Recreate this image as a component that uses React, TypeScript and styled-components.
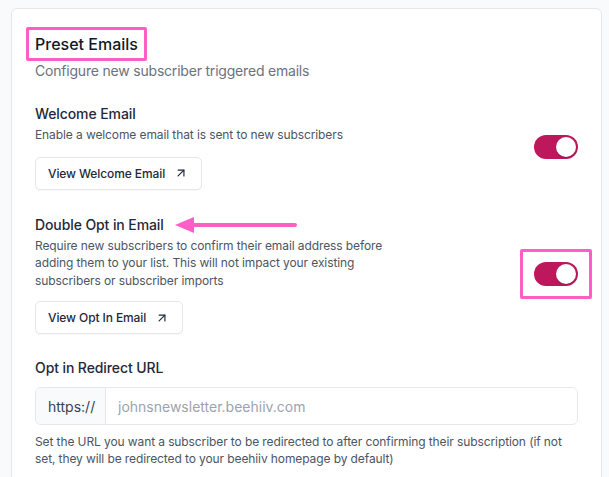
import React from "react";
import styled, { createGlobalStyle } from "styled-components";
import { ArrowUpRight } from "lucide-react";

const GlobalStyle = createGlobalStyle`
  html, body { margin: 0; padding: 0; background: #f9fafb; }
  body { font-family: Inter, "Noto Sans", sans-serif; -webkit-font-smoothing: antialiased; }
  * { box-sizing: border-box; }
`;

const Page = styled.div`
  padding: 8px 7px 0 11px;
  height: 477px;
  overflow: hidden;
`;

const Card = styled.div`
  background: #ffffff;
  border: 1px solid #e5e7eb;
  border-radius: 6px;
  padding: 18px 23px 40px 23px;
  display: flex;
  flex-direction: column;
`;

const Title = styled.h2`
  align-self: flex-start;
  margin: 0 0 0 -9px;
  padding: 3px 6px;
  border: 3px solid #ff5ec7;
  border-radius: 2px;
  font-size: 16px;
  line-height: 22px;
  font-weight: 500;
  color: #111827;
`;

const Subtitle = styled.p`
  margin: 0;
  font-size: 14px;
  line-height: 20px;
  color: #6b7280;
  letter-spacing: -0.2px;
`;

const Section = styled.div<{ $mt: number }>`
  margin-top: ${(p) => p.$mt}px;
  display: flex;
  align-items: center;
  justify-content: space-between;
`;

const Info = styled.div`
  display: flex;
  flex-direction: column;
  align-items: flex-start;
  max-width: 360px;
`;

const LabelRow = styled.div`
  display: flex;
  align-items: center;
`;

const Label = styled.div`
  font-size: 14px;
  line-height: 20px;
  font-weight: 500;
  color: #1f2937;
  letter-spacing: -0.1px;
`;

const Desc = styled.p<{ $mb: number }>`
  margin: 2px 0 ${(p) => p.$mb}px;
  font-size: 12px;
  line-height: 17.5px;
  color: #4b5563;
  letter-spacing: -0.1px;
`;

const Button = styled.button`
  display: inline-flex;
  align-items: center;
  gap: 9px;
  height: 33px;
  padding: 0 13px 0 12px;
  background: #ffffff;
  border: 1px solid #e5e7eb;
  border-radius: 5px;
  box-shadow: 0 1px 1px rgba(0, 0, 0, 0.03);
  font-family: inherit;
  font-size: 12px;
  font-weight: 500;
  letter-spacing: -0.1px;
  color: #1f2937;
  cursor: pointer;
`;

const ToggleWrap = styled.div<{ $highlight?: boolean }>`
  display: flex;
  align-items: center;
  justify-content: center;
  margin-right: ${(p) => (p.$highlight ? "-14px" : "0")};
  padding: ${(p) => (p.$highlight ? "10px 11px" : "0")};
  border: ${(p) => (p.$highlight ? "3px solid #ff5ec7" : "none")};
  border-radius: 2px;
`;

const Toggle = styled.div`
  position: relative;
  width: 44px;
  height: 24px;
  border-radius: 12px;
  background: #be185d;
`;

const Knob = styled.span`
  position: absolute;
  top: 2px;
  right: 2px;
  width: 20px;
  height: 20px;
  border-radius: 50%;
  background: #ffffff;
  box-shadow: 0 1px 2px rgba(0, 0, 0, 0.2);
`;

const Annotation = styled.svg`
  margin-left: 11px;
  display: block;
`;

const FieldLabel = styled(Label)`
  margin-top: 24px;
  margin-bottom: 9px;
`;

const InputGroup = styled.div`
  display: flex;
  height: 38px;
  border: 1px solid #e5e7eb;
  border-radius: 6px;
  overflow: hidden;
`;

const Prefix = styled.span`
  display: flex;
  align-items: center;
  width: 70px;
  padding-left: 12px;
  background: #f9fafb;
  border-right: 1px solid #e5e7eb;
  font-size: 14px;
  color: #374151;
`;

const Input = styled.input`
  flex: 1;
  border: none;
  outline: none;
  padding: 0 12px;
  font-family: inherit;
  font-size: 14px;
  color: #111827;
  &::placeholder { color: #9ca3af; }
`;

const Help = styled.p`
  margin: 8px 0 0;
  font-size: 12px;
  line-height: 17px;
  color: #4b5563;
  letter-spacing: -0.1px;
`;

export default function App() {
  return (
    <>
      <GlobalStyle />
      <Page>
        <Card>
          <Title>Preset Emails</Title>
          <Subtitle>Configure new subscriber triggered emails</Subtitle>

          <Section $mt={23}>
            <Info>
              <Label>Welcome Email</Label>
              <Desc $mb={13}>Enable a welcome email that is sent to new subscribers</Desc>
              <Button>
                View Welcome Email
                <ArrowUpRight size={14} strokeWidth={2} />
              </Button>
            </Info>
            <ToggleWrap>
              <Toggle><Knob /></Toggle>
            </ToggleWrap>
          </Section>

          <Section $mt={25}>
            <Info>
              <LabelRow>
                <Label>Double Opt in Email</Label>
                <Annotation width="122" height="18" viewBox="0 0 122 18">
                  <line x1="14" y1="9" x2="120" y2="9" stroke="#ff5ec7" strokeWidth="4" strokeLinecap="round" />
                  <polygon points="0,9 19,1 19,17" fill="#ff5ec7" />
                </Annotation>
              </LabelRow>
              <Desc $mb={12}>
                Require new subscribers to confirm their email address before adding them to your list. This will not impact your existing subscribers or subscriber imports
              </Desc>
              <Button>
                View Opt In Email
                <ArrowUpRight size={14} strokeWidth={2} />
              </Button>
            </Info>
            <ToggleWrap $highlight>
              <Toggle><Knob /></Toggle>
            </ToggleWrap>
          </Section>

          <FieldLabel>Opt in Redirect URL</FieldLabel>
          <InputGroup>
            <Prefix>https://</Prefix>
            <Input placeholder="johnsnewsletter.beehiiv.com" />
          </InputGroup>
          <Help>
            Set the URL you want a subscriber to be redirected to after confirming their subscription (if not set, they will be redirected to your beehiiv homepage by default)
          </Help>
        </Card>
      </Page>
    </>
  );
}
